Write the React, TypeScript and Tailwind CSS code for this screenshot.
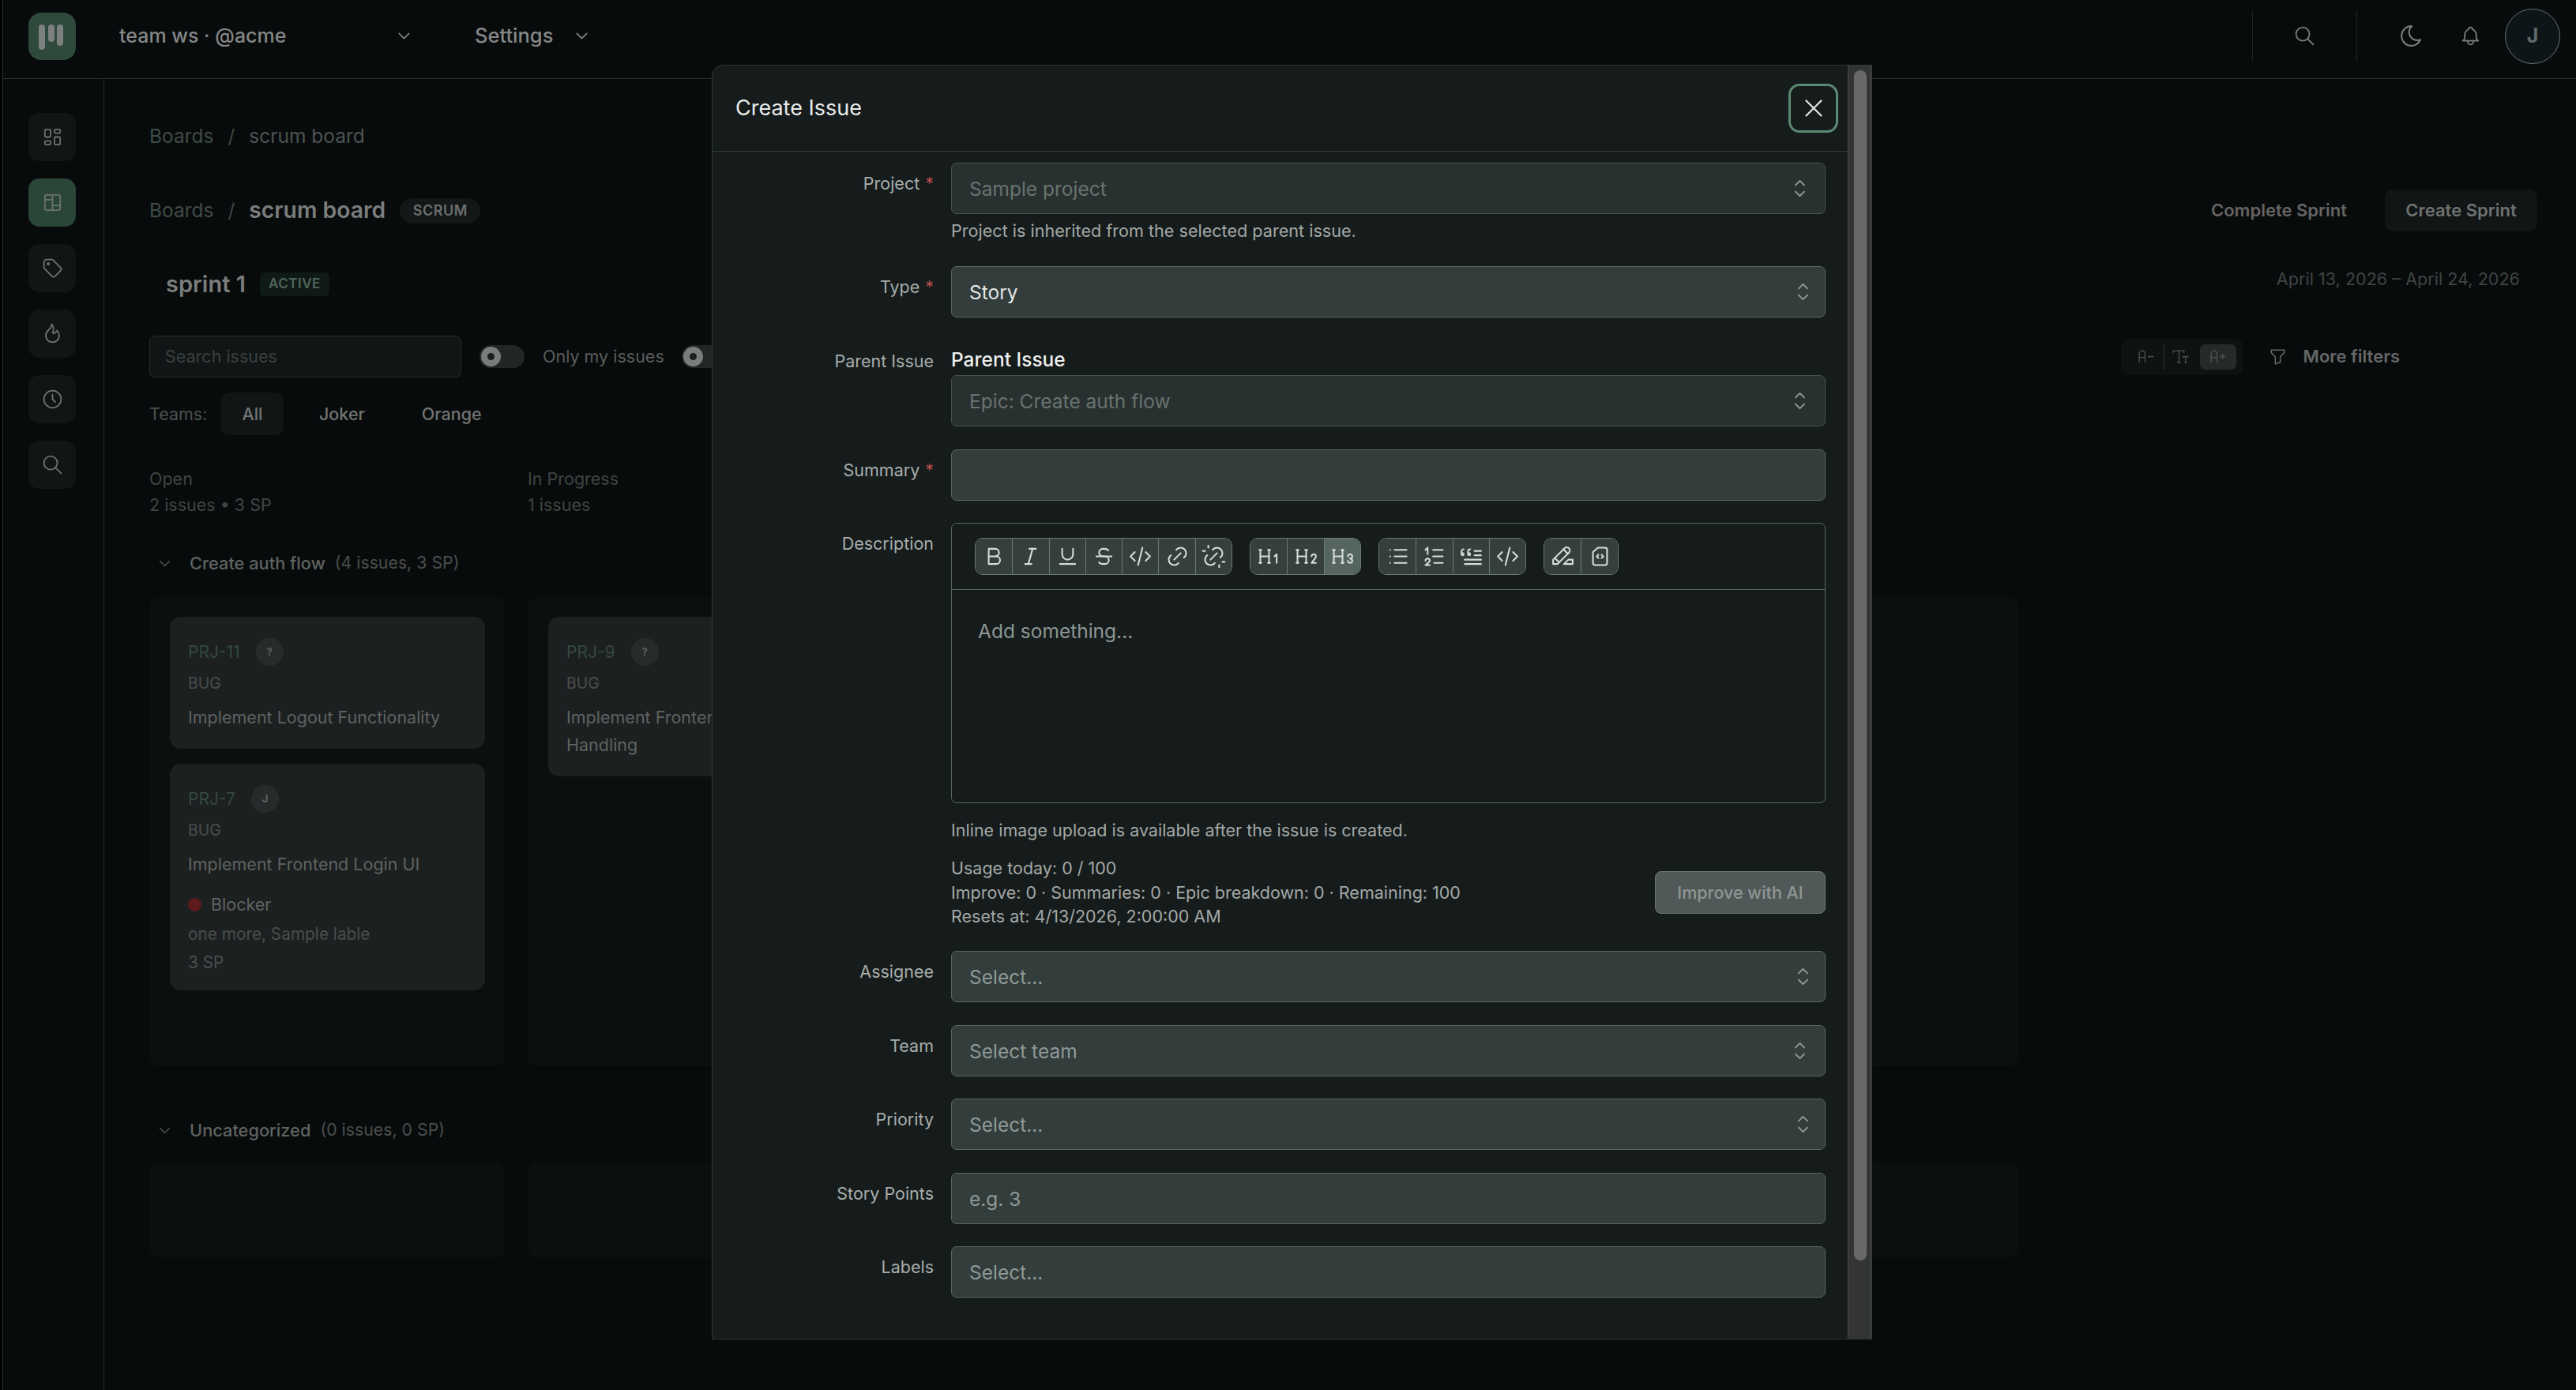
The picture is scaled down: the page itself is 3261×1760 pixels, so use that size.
import React from 'react';
import {
  TbBell, TbBlockquote, TbBold, TbChevronDown, TbClock, TbCode, TbFilter, TbFlame,
  TbH1, TbH2, TbH3, TbHighlight, TbItalic, TbLayoutBoard, TbLayoutDashboard, TbLink, TbList,
  TbListNumbers, TbMoon, TbSearch, TbSelector, TbStrikethrough, TbTag, TbTextDecrease,
  TbTextIncrease, TbTextSize, TbUnderline, TbUnlink, TbX,
} from 'react-icons/tb';

const CodeCard = ({ size, strokeWidth }: { size?: number; strokeWidth?: number }) => (
  <svg width={size} height={size} viewBox="0 0 24 24" fill="none" stroke="currentColor" strokeWidth={strokeWidth} strokeLinecap="round" strokeLinejoin="round">
    <path d="M10 4h6.5a2 2 0 0 1 2 2v12a2 2 0 0 1 -2 2h-9a2 2 0 0 1 -2 -2v-10z" />
    <path d="M10.5 10.5l-1.5 1.5l1.5 1.5" />
    <path d="M13.5 10.5l1.5 1.5l-1.5 1.5" />
  </svg>
);

const Toggle = () => (
  <div className="w-[57px] h-[29px] shrink-0 rounded-full bg-[#222726] flex items-center pl-[2px]">
    <div className="w-[25px] h-[25px] rounded-full bg-[#7a7d7c] flex items-center justify-center">
      <div className="w-[9px] h-[9px] rounded-full bg-[#1b1f1e]" />
    </div>
  </div>
);

const Card = ({ id, who, title, extra }: { id: string; who: string; title: React.ReactNode; extra?: boolean }) => (
  <div className={`rounded-[14px] bg-[#1d2020] pl-[23px] pt-[27px] ${extra ? 'pb-[20px]' : 'pb-[22px]'}`}>
    <div className="flex items-center h-[35px]">
      <span className="text-[21px] text-[#33493f]">{id}</span>
      <span className="ml-[20px] w-[35px] h-[35px] rounded-full bg-[#272b2c] flex items-center justify-center text-[13px] font-bold text-[#5f6463]">{who}</span>
    </div>
    <div className="mt-[10px] h-[24px] leading-[24px] text-[19.5px] text-[#4a4e4d]">BUG</div>
    <div className="mt-[14px] text-[21.5px] leading-[35px] text-[#5f6362]">{title}</div>
    {extra && (
      <>
        <div className="mt-[18px] h-[30px] flex items-center text-[21.5px] text-[#5f6362]">
          <span className="w-[17px] h-[17px] rounded-full bg-[#5e1a1b] mr-[12px]" />
          Blocker
        </div>
        <div className="mt-[8px] h-[30px] leading-[30px] text-[20.8px] text-[#4a4e4d]">one more, Sample lable</div>
        <div className="mt-[6px] h-[30px] leading-[30px] text-[20.8px] text-[#4a4e4d]">3 SP</div>
      </>
    )}
  </div>
);

const GroupHead = ({ name, count }: { name: string; count: string }) => (
  <div className="flex items-center h-[32px] pl-[8px] text-[21.8px]">
    <TbChevronDown size={23} strokeWidth={1.5} className="text-[#4a4e4d]" />
    <span className="ml-[20px] font-medium text-[#5f6361]">{name}</span>
    <span className="ml-[12px] text-[21.3px] text-[#4a4e4d]">{count}</span>
  </div>
);

const Field = ({ text, tone, shift, dim, plain }: { text: string; tone: string; shift?: boolean; dim?: boolean; plain?: boolean }) => (
  <div className={`h-[65px] rounded-[7px] border flex items-center justify-between pl-[22px] pt-[2px] text-[24.5px] ${tone} ${dim ? 'bg-[#283130] border-[#47524f]' : 'bg-[#323d3c] border-[#5a6864]'} ${shift ? 'pr-[11px]' : 'pr-[15px]'}`}>
    <span>{text}</span>
    {!plain && <TbSelector size={33} strokeWidth={1.5} className="text-[#8e9997] -mt-[2px]" />}
  </div>
);

const Row = ({ label, req, children, mt, top }: { label: string; req?: boolean; children: React.ReactNode; mt: string; top?: string }) => (
  <div className={`flex ${mt}`}>
    <div className={`w-[280px] shrink-0 ${top ?? 'pt-[11px]'} h-[42px] leading-[30px] text-right text-[21.5px] text-[#a8adab]`}>
      {label}
      {req && <span className="ml-[7px] text-[#b84a4a]">*</span>}
    </div>
    <div className="ml-[22px] flex-1">{children}</div>
  </div>
);

const ToolGroup = ({ icons, active }: { icons: React.ComponentType<{ size?: number; strokeWidth?: number }>[]; active?: number }) => (
  <div className="flex h-[47px] rounded-[10px] border border-[#6a7a75] overflow-hidden">
    {icons.map((Icon, i) => (
      <div
        key={i}
        className={`w-[46.3px] flex items-center justify-center text-[#d5dbd9] ${i > 0 ? 'border-l border-[#6a7a75]' : ''} ${active === i ? 'bg-[#55665f]' : 'bg-[#353f3d]'}`}
      >
        <Icon size={33} strokeWidth={1.5} />
      </div>
    ))}
  </div>
);

const sideIcons = [TbLayoutDashboard, TbLayoutBoard, TbTag, TbFlame, TbClock, TbSearch];

const CreateIssueModal = () => (
  <div className="absolute left-[901px] top-[82px] w-[1469px] h-[1614px] flex rounded-tl-[14px] border border-[#2f3636] bg-[#161c1c] overflow-hidden">
    <div className="flex-1">
      <div className="h-[109px] border-b border-[#323a39] flex items-center justify-between pl-[29px] pr-[12px]">
        <span className="text-[27px] text-[#e9ecea]">Create Issue</span>
        <button className="w-[63px] h-[62px] rounded-[14px] border-[3px] border-[#5a8a72] flex items-center justify-center text-[#e3e6e4]">
          <TbX size={38} strokeWidth={1.4} />
        </button>
      </div>
      <div className="pr-[28px]">
        <Row label="Project" req mt="mt-[14px]">
          <Field text="Sample project" tone="text-[#68736f]" dim />
          <div className="mt-[6px] h-[30px] leading-[30px] text-[21.6px] text-[#a3a8a6]">Project is inherited from the selected parent issue.</div>
        </Row>
        <Row label="Type" req mt="mt-[30px]">
          <Field text="Story" tone="text-[#e5e7e6]" shift />
        </Row>
        <Row label="Parent Issue" mt="mt-[39px]" top="pt-[1px]">
          <div className="h-[30px] leading-[30px] -mt-[1px] mb-[5px] text-[24.5px] font-medium text-[#eef0ef]">Parent Issue</div>
          <Field text="Epic: Create auth flow" tone="text-[#68736f]" dim />
        </Row>
        <Row label="Summary" req mt="mt-[29px]">
          <Field text="" tone="text-[#e5e7e6]" plain />
        </Row>
        <Row label="Description" mt="mt-[28px]">
          <div className="h-[355px] rounded-[7px] border border-[#5a6663]">
            <div className="h-[84px] border-b border-[#5a6663] flex items-center gap-[22px] pl-[29px]">
              <ToolGroup icons={[TbBold, TbItalic, TbUnderline, TbStrikethrough, TbCode, TbLink, TbUnlink]} />
              <ToolGroup icons={[TbH1, TbH2, TbH3]} active={2} />
              <ToolGroup icons={[TbList, TbListNumbers, TbBlockquote, TbCode]} />
              <ToolGroup icons={[TbHighlight, CodeCard]} />
            </div>
            <div className="pl-[33px] pt-[34px] leading-[36px] text-[24.5px] text-[#8c9694]">Add something...</div>
          </div>
          <div className="mt-[19px] h-[30px] leading-[30px] text-[21.5px] text-[#a3a8a6]">Inline image upload is available after the issue is created.</div>
          <div className="mt-[18px] flex items-center justify-between">
            <div className="text-[21.5px] leading-[30.5px] text-[#a3a8a6]">
              <div>Usage today: 0 / 100</div>
              <div>Improve: 0 · Summaries: 0 · Epic breakdown: 0 · Remaining: 100</div>
              <div>Resets at: 4/13/2026, 2:00:00 AM</div>
            </div>
            <button className="w-[216px] h-[54px] rounded-[8px] border border-[#6a7572] bg-[#505957] text-[21.5px] font-medium text-[#8e9694]">Improve with AI</button>
          </div>
        </Row>
        <Row label="Assignee" mt="mt-[28px]">
          <Field text="Select..." tone="text-[#8e9997]" shift />
        </Row>
        <Row label="Team" mt="mt-[29px]">
          <Field text="Select team" tone="text-[#8e9997]" />
        </Row>
        <Row label="Priority" mt="mt-[28px]">
          <Field text="Select..." tone="text-[#8e9997]" shift />
        </Row>
        <Row label="Story Points" mt="mt-[29px]">
          <Field text="e.g. 3" tone="text-[#8e9997]" plain />
        </Row>
        <Row label="Labels" mt="mt-[28px]">
          <Field text="Select..." tone="text-[#8e9997]" plain />
        </Row>
      </div>
    </div>
    <div className="w-[30px] shrink-0 bg-[#333535] border-x border-[#4a4c4c] pl-[7px] pt-[6px]">
      <div className="w-[16px] h-[1507px] rounded-full bg-[#696969]" />
    </div>
  </div>
);

const App = () => {
  return (
    <div className="relative w-full h-[1760px] overflow-hidden bg-black pl-[3px] font-[Inter,sans-serif]">
      <div className="h-full border-l border-[#2d3231] bg-[#080b0b]">
        {/* top bar */}
        <div className="h-[100px] border-b border-[#2a302f] flex items-center pl-[32px] pr-[20px] pb-[8px]">
          <div className="w-[60px] h-[60px] rounded-[16px] bg-[#2f4a3c] shrink-0">
            <svg viewBox="0 0 60 60" className="w-full h-full" fill="#7c807e">
              <rect x="13" y="15" width="8" height="32" rx="4" />
              <rect x="25" y="15" width="8" height="22" rx="4" />
              <rect x="36" y="15" width="8" height="27" rx="4" />
            </svg>
          </div>
          <div className="ml-[55px] w-[373px] flex items-center justify-between text-[25px] font-medium text-[#858787]">
            <span>team ws · @acme</span>
            <TbChevronDown size={25} strokeWidth={1.5} />
          </div>
          <div className="ml-[77px] flex items-center gap-[24px] text-[25.5px] font-medium text-[#858787]">
            <span>Settings</span>
            <TbChevronDown size={25} strokeWidth={1.5} />
          </div>
          <div className="ml-auto flex items-center text-[#7b7e7d]">
            <div className="w-px h-[65px] bg-[#1f2423]" />
            <div className="w-[131px] flex justify-center"><TbSearch size={29} strokeWidth={1.5} /></div>
            <div className="w-px h-[65px] bg-[#1f2423]" />
            <div className="w-[129px] pl-[52px]"><TbMoon size={33} strokeWidth={1.5} /></div>
            <TbBell size={29} strokeWidth={1.5} />
            <div className="ml-[29px] w-[70px] h-[70px] rounded-full border border-[#6a7170] bg-[#0e1518] flex items-center justify-center text-[25px] font-bold text-[#60696b]">J</div>
          </div>
        </div>

        <div className="flex">
          {/* sidebar */}
          <div className="w-[128px] h-[1660px] shrink-0 border-r border-[#2a302f] pl-[32px] pt-[43px] flex flex-col gap-[22px]">
            {sideIcons.map((Icon, i) => (
              <div key={i} className={`w-[60px] h-[61px] rounded-[14px] flex items-center justify-center ${i === 1 ? 'bg-[#2a4638]' : 'bg-[#121515]'} text-[#6d7170]`}>
                <Icon size={29} strokeWidth={1.5} />
              </div>
            ))}
          </div>

          {/* content */}
          <div className="flex-1 pl-[57px] pr-[49px]">
            <div className="mt-[54px] h-[36px] flex items-center text-[24.5px]">
              <span className="text-[#3f4c47]">Boards</span>
              <span className="mx-[18px] text-[#3f4644]">/</span>
              <span className="text-[#4d5553]">scrum board</span>
            </div>
            <div className="mt-[50px] h-[53px] flex items-center justify-between">
              <div className="flex items-center text-[24.5px]">
                <span className="text-[#3f4c47]">Boards</span>
                <span className="mx-[18px] text-[#3f4644]">/</span>
                <span className="text-[28.3px] font-semibold text-[#7a7d7c]">scrum board</span>
                <span className="ml-[18px] w-[102px] h-[32px] rounded-full bg-[#131717] flex items-center justify-center text-[18px] font-semibold tracking-[0.5px] text-[#6b6f6d]">SCRUM</span>
              </div>
              <div className="flex items-center text-[22px] font-semibold">
                <span className="text-[#676464]">Complete Sprint</span>
                <span className="ml-[48px] w-[193px] h-[53px] rounded-[10px] bg-[#111515] flex items-center justify-center text-[#6e7270]">Create Sprint</span>
              </div>
            </div>
            <div className="mt-[45px] h-[37px] flex items-start justify-between">
              <div className="mt-[7px] ml-[21px] h-[30px] flex items-center">
                <span className="text-[29px] font-semibold text-[#7a7d7c]">sprint 1</span>
                <span className="ml-[18px] w-[88px] h-[30px] rounded-[6px] bg-[#0f1a16] flex items-center justify-center text-[17px] font-semibold tracking-[0.5px] text-[#4f6459]">ACTIVE</span>
              </div>
              <span className="mr-[22px] h-[30px] leading-[30px] text-[21.6px] text-[#3f4644]">April 13, 2026 – April 24, 2026</span>
            </div>
            <div className="mt-[50px] h-[53px] flex items-center">
              <div className="w-[395px] h-[53px] rounded-[7px] border border-[#262c2b] bg-[#111515] pl-[19px] flex items-center text-[21.5px] text-[#394240]">Search issues</div>
              <div className="ml-[23px]"><Toggle /></div>
              <span className="ml-[23px] text-[21.5px] text-[#5a5e5d]">Only my issues</span>
              <div className="ml-[22px]"><Toggle /></div>
              <div className="ml-auto mr-[31px] w-[155px] h-[46px] rounded-[10px] bg-[#0e1212] flex items-center pl-[19px] text-[#4f5452]">
                <TbTextDecrease size={25} strokeWidth={1.25} />
                <div className="ml-[10px] w-px h-[32px] bg-[#2a2f2e]" />
                <div className="ml-[8px]"><TbTextSize size={25} strokeWidth={1.25} /></div>
                <div className="ml-[12px] w-[46px] h-[32px] rounded-[7px] bg-[#252b2a] flex items-center justify-center"><TbTextIncrease size={25} strokeWidth={1.25} /></div>
              </div>
              <div className="mr-[174px] flex items-center gap-[20px] text-[22px] font-semibold text-[#656867]">
                <TbFilter size={25} strokeWidth={1.5} />
                <span>More filters</span>
              </div>
            </div>
            <div className="mt-[19px] h-[54px] flex items-center text-[21.5px]">
              <span className="w-[91px] text-[#4a5250]">Teams:</span>
              <div className="flex items-center gap-[18px] font-medium text-[#727574]">
                <span className="w-[79px] h-[54px] rounded-[10px] bg-[#111515] flex items-center justify-center">All</span>
                <span className="px-[27px]">Joker</span>
                <span className="px-[27px]">Orange</span>
              </div>
            </div>
            <div className="mt-[39px] grid grid-cols-5 gap-[29px] w-[2366px] text-[21.5px] leading-[33px] text-[#3f4644]">
              <div>
                <div>Open</div>
                <div>2 issues • 3 SP</div>
              </div>
              <div>
                <div>In Progress</div>
                <div>1 issues</div>
              </div>
            </div>
            <div className="mt-[41px]">
              <GroupHead name="Create auth flow" count="(4 issues, 3 SP)" />
            </div>
            <div className="mt-[27px] grid grid-cols-5 gap-[29px] w-[2366px] h-[594px]">
              <div className="rounded-[12px] bg-[#0b0f0f] pl-[26px] pr-[25px] pt-[25px] flex flex-col gap-[19px]">
                <Card id="PRJ-11" who="?" title="Implement Logout Functionality" />
                <Card id="PRJ-7" who="J" title="Implement Frontend Login UI" extra />
              </div>
              <div className="rounded-[12px] bg-[#0b0f0f] pl-[26px] pr-[25px] pt-[25px]">
                <Card id="PRJ-9" who="?" title={<>Implement Frontend Error<br />Handling</>} />
              </div>
              <div className="rounded-[12px] bg-[#0b0f0f]" />
              <div className="rounded-[12px] bg-[#0b0f0f]" />
              <div className="rounded-[12px] bg-[#0b0f0f]" />
            </div>
            <div className="mt-[65px]">
              <GroupHead name="Uncategorized" count="(0 issues, 0 SP)" />
            </div>
            <div className="mt-[25px] grid grid-cols-5 gap-[29px] w-[2366px] h-[120px]">
              {[0, 1, 2, 3, 4].map((n) => (
                <div key={n} className="rounded-[12px] bg-[#0b0f0f]" />
              ))}
            </div>
          </div>
        </div>
      </div>
      <CreateIssueModal />
    </div>
  );
};

export default App;
